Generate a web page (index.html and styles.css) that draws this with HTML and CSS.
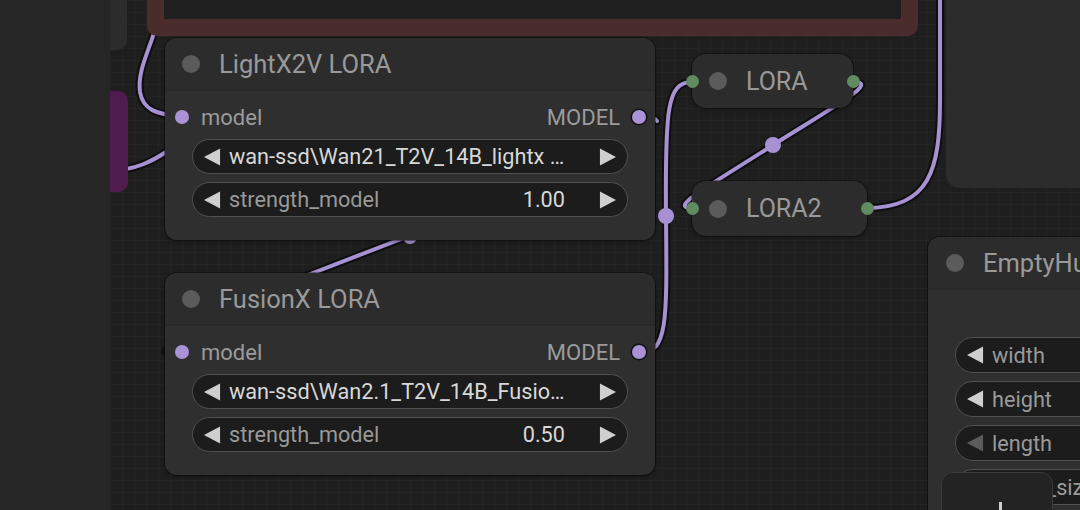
FILE: index.html
```html
<!DOCTYPE html>
<html lang="en">
<head>
  <meta charset="UTF-8">
  <title>Workflow</title>
  <link rel="stylesheet" href="styles.css">
</head>
<body>
  <div class="app">
    <aside class="sidebar"></aside>

    <main class="canvas">
      <svg class="links" viewBox="110 0 970 510" width="970" height="510">
        <g class="shadow">
          <path d="M158 20 C150 50, 137 70, 140 92 C143 110, 156 114, 182 117"/>
          <path d="M112 170 C135 170, 152 162, 172 148"/>
          <path d="M300 278 L414 234"/>
          <path d="M640 353 C668 353, 667 320, 666 216 C665 110, 667 82, 692 82"/>
          <path d="M853 82 C878 82, 845 100, 773 145 C706 188, 668 208, 692 208"/>
          <path d="M866 208 C930 208, 940 170, 940 100 L940 -10"/>
          <path d="M646 117 C652 117, 655 118, 657 121"/>
        </g>
        <g class="wire">
          <path d="M158 20 C150 50, 137 70, 140 92 C143 110, 156 114, 182 117"/>
          <path d="M112 170 C135 170, 152 162, 172 148"/>
          <path d="M300 278 L414 234"/>
          <path d="M640 353 C668 353, 667 320, 666 216 C665 110, 667 82, 692 82"/>
          <path d="M853 82 C878 82, 845 100, 773 145 C706 188, 668 208, 692 208"/>
          <path d="M866 208 C930 208, 940 170, 940 100 L940 -10"/>
          <path d="M646 117 C652 117, 655 118, 657 121"/>
        </g>
        <circle class="mid" cx="410" cy="237" r="7"/>
        <circle class="mid" cx="666" cy="216" r="8"/>
        <circle class="mid" cx="773" cy="145" r="8"/>
        <circle class="glow" cx="113" cy="170" r="6"/>
        <circle class="bump" cx="166" cy="351" r="5"/>
      </svg>

      <div class="stub stub-left"></div>
      <div class="group-purple"></div>
      <div class="frame"></div>
      <div class="stub stub-right"></div>

      <div class="node lora-node node-light">
        <div class="node-title"><span class="title-dot"></span>LightX2V LORA</div>
        <div class="node-body">
          <div class="slots">
            <span class="slot-in"><i class="dot purple"></i>model</span>
            <span class="slot-out">MODEL<i class="dot purple ring"></i></span>
          </div>
          <div class="widget">
            <svg class="arrow" viewBox="0 0 18 18"><polygon points="17,0 17,18 0,9"/></svg>
            <span class="value wide">wan-ssd\Wan21_T2V_14B_lightx …</span>
            <svg class="arrow" viewBox="0 0 18 18"><polygon points="1,0 1,18 18,9"/></svg>
          </div>
          <div class="widget">
            <svg class="arrow" viewBox="0 0 18 18"><polygon points="17,0 17,18 0,9"/></svg>
            <span class="label">strength_model</span>
            <span class="value num">1.00</span>
            <svg class="arrow" viewBox="0 0 18 18"><polygon points="1,0 1,18 18,9"/></svg>
          </div>
        </div>
      </div>

      <div class="node lora-node node-fusion">
        <div class="node-title"><span class="title-dot"></span>FusionX LORA</div>
        <div class="node-body">
          <div class="slots">
            <span class="slot-in"><i class="dot purple"></i>model</span>
            <span class="slot-out">MODEL<i class="dot purple ring"></i></span>
          </div>
          <div class="widget">
            <svg class="arrow" viewBox="0 0 18 18"><polygon points="17,0 17,18 0,9"/></svg>
            <span class="value wide">wan-ssd\Wan2.1_T2V_14B_Fusio…</span>
            <svg class="arrow" viewBox="0 0 18 18"><polygon points="1,0 1,18 18,9"/></svg>
          </div>
          <div class="widget">
            <svg class="arrow" viewBox="0 0 18 18"><polygon points="17,0 17,18 0,9"/></svg>
            <span class="label">strength_model</span>
            <span class="value num">0.50</span>
            <svg class="arrow" viewBox="0 0 18 18"><polygon points="1,0 1,18 18,9"/></svg>
          </div>
        </div>
      </div>

      <div class="node reroute reroute-a">
        <i class="dot green in"></i><span class="title-dot"></span>LORA<i class="dot green out"></i>
      </div>
      <div class="node reroute reroute-b">
        <i class="dot green in"></i><span class="title-dot"></span>LORA2<i class="dot green out"></i>
      </div>

      <div class="node latent-node">
        <div class="node-title"><span class="title-dot"></span>EmptyHunyuanLatentVideo</div>
        <div class="node-body">
          <div class="widget">
            <svg class="arrow" viewBox="0 0 18 18"><polygon points="17,0 17,18 0,9"/></svg>
            <span class="label">width</span>
          </div>
          <div class="widget">
            <svg class="arrow" viewBox="0 0 18 18"><polygon points="17,0 17,18 0,9"/></svg>
            <span class="label">height</span>
          </div>
          <div class="widget">
            <svg class="arrow dim" viewBox="0 0 18 18"><polygon points="17,0 17,18 0,9"/></svg>
            <span class="label">length</span>
          </div>
          <div class="widget">
            <svg class="arrow" viewBox="0 0 18 18"><polygon points="17,0 17,18 0,9"/></svg>
            <span class="label">batch_size</span>
          </div>
        </div>
      </div>

      <div class="dock"><span class="dock-mark"></span></div>
    </main>
  </div>
</body>
</html>
```

FILE: styles.css
```css
* { box-sizing: border-box; }

body {
  margin: 0;
  font-family: Roboto, 'Liberation Sans', sans-serif;
  background: #1f1f1f;
  overflow: hidden;
}

.app {
  display: flex;
  width: 1080px;
  height: 510px;
}

.sidebar {
  width: 110px;
  flex: none;
  background: #262626;
}

.canvas {
  position: relative;
  flex: 1;
  overflow: hidden;
  background-color: #1e1e1e;
  background-image:
    linear-gradient(to right, rgba(255,255,255,0.025) 1px, transparent 1px),
    linear-gradient(to bottom, rgba(255,255,255,0.025) 1px, transparent 1px);
  background-size: 12px 12px;
}

/* links */
.links {
  position: absolute;
  left: 0;
  top: 0;
}

.links path {
  fill: none;
  stroke-linecap: round;
}

.shadow path {
  stroke: #0e0e0e;
  stroke-width: 8;
}

.wire path {
  stroke: #a692d2;
  stroke-width: 4;
}

.mid { fill: #a692d2; }
.glow { fill: #c060c0; opacity: 0.7; }
.bump { fill: #111; }

/* background shapes */
.stub {
  position: absolute;
  background: #2c2c2c;
}

.stub-left {
  left: -20px;
  top: -20px;
  width: 37px;
  height: 70px;
  border-radius: 0 0 10px 0;
}

.stub-right {
  left: 836px;
  top: -20px;
  width: 200px;
  height: 208px;
  border-radius: 14px;
}

.group-purple {
  position: absolute;
  left: -20px;
  top: 91px;
  width: 38px;
  height: 101px;
  border-radius: 10px;
  background: #501c50;
}

.frame {
  position: absolute;
  left: 37px;
  top: -100px;
  width: 771px;
  height: 136px;
  border: 17px solid #4a2c2c;
  border-radius: 10px;
  background: #1f1f1f;
}

/* nodes */
.node {
  position: absolute;
  background: #2f2f2f;
  color: #999;
  box-shadow: 0 0 0 1px rgba(0,0,0,0.35), 0 2px 4px rgba(0,0,0,0.3);
}

.lora-node {
  width: 490px;
  height: 202px;
  border-radius: 12px;
}

.node-light { left: 55px; top: 38px; }
.node-fusion { left: 55px; top: 273px; }

.node-title {
  height: 53px;
  display: flex;
  align-items: center;
  gap: 19px;
  padding-left: 17px;
  font-size: 25.5px;
  white-space: nowrap;
  background: #2c2c2c;
  border-radius: 12px 12px 0 0;
  border-bottom: 2px solid #282828;
}

.title-dot {
  width: 18px;
  height: 18px;
  flex: none;
  border-radius: 50%;
  background: #5b5b5b;
}

.node-body {
  padding: 12px 27px 0;
  display: flex;
  flex-direction: column;
  gap: 8px;
}

.slots {
  height: 28px;
  margin: 0 -18px 0 -17px;
  display: flex;
  justify-content: space-between;
  align-items: center;
  font-size: 22px;
  color: #9b9b9b;
}

.slot-in, .slot-out {
  display: flex;
  align-items: center;
  gap: 12px;
}

.dot {
  display: block;
  width: 14px;
  height: 14px;
  border-radius: 50%;
}

.purple { background: #a993d6; }
.ring { box-shadow: 0 0 0 1.5px #111; }
.green { background: #608a60; width: 13px; height: 13px; }

.widget {
  height: 35px;
  display: flex;
  align-items: center;
  gap: 8px;
  padding: 0 11px;
  border: 1.5px solid #505050;
  border-radius: 18px;
  background: #1c1c1c;
  font-size: 21.7px;
  white-space: nowrap;
}

.arrow {
  width: 17px;
  height: 18px;
  flex: none;
  fill: #cfcfcf;
}

.arrow.dim { fill: #5c5c5c; }

.label {
  color: #999;
  flex: 1;
}

.value { color: #d8d8d8; }
.value.wide { flex: 1; }
.value.num { margin-right: 26px; }

/* reroute style collapsed nodes */
.reroute {
  height: 54px;
  display: flex;
  align-items: center;
  padding-left: 17px;
  gap: 19px;
  font-size: 25px;
  border-radius: 14px;
  background: #2c2c2c;
}

.reroute-a { left: 582px; top: 54px; width: 161px; }
.reroute-b { left: 582px; top: 181px; width: 175px; height: 55px; }

.reroute .in,
.reroute .out {
  position: absolute;
  top: 50%;
  margin-top: -6.5px;
}

.reroute .in { left: -6.5px; }
.reroute .out { right: -6.5px; }

/* latent node */
.latent-node {
  left: 818px;
  top: 237px;
  width: 300px;
  height: 320px;
  border-radius: 12px;
}

.latent-node .node-title {
  padding-left: 18px;
}

.latent-node .node-body {
  padding-top: 47px;
}

.latent-node .widget {
  height: 36px;
}

/* bottom dock */
.dock {
  position: absolute;
  left: 831px;
  top: 472px;
  width: 112px;
  height: 60px;
  background: #232323;
  border: 1px solid #3a3a3a;
  border-radius: 12px;
}

.dock-mark {
  position: absolute;
  left: 57px;
  top: 29px;
  width: 3px;
  height: 12px;
  background: #cfcfcf;
}
```
